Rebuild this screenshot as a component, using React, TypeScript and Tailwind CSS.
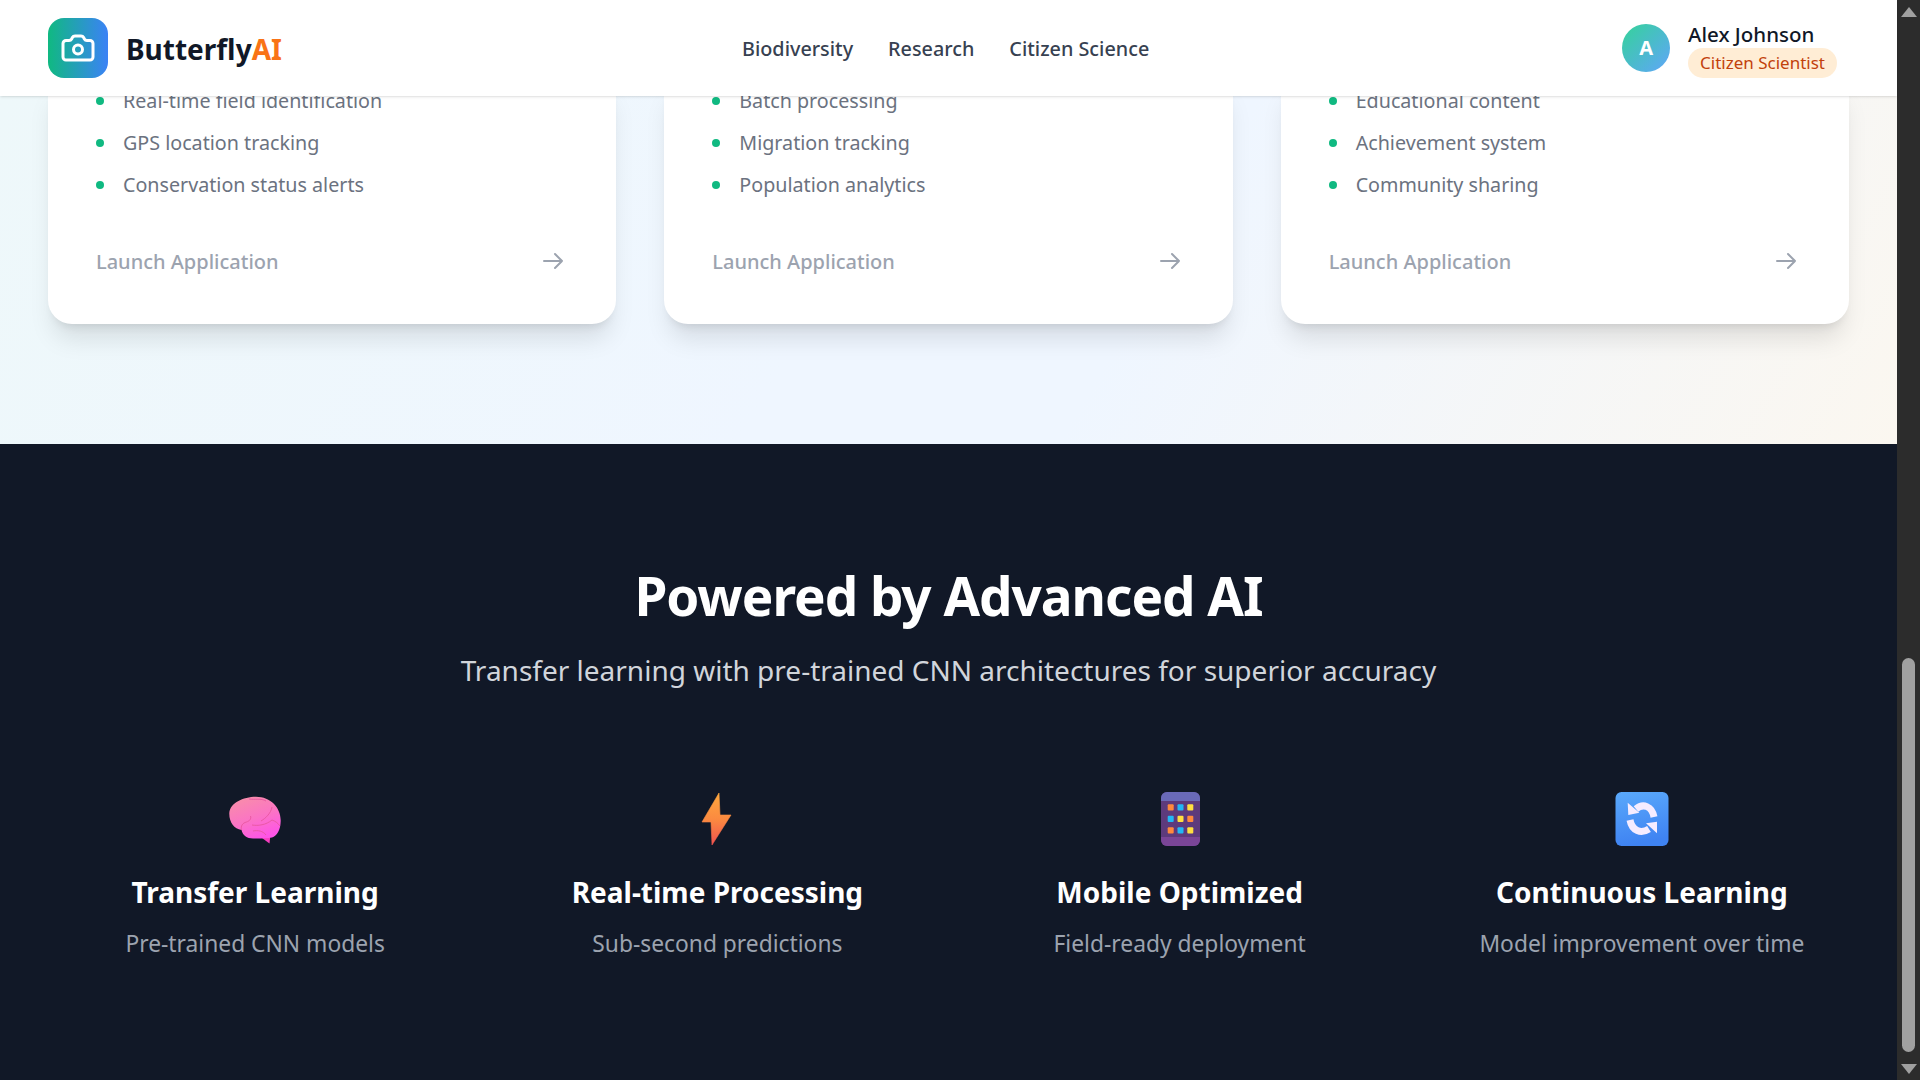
import { Camera } from "lucide-react";

const columns = [
  ["Real-time field identification", "GPS location tracking", "Conservation status alerts"],
  ["Batch processing", "Migration tracking", "Population analytics"],
  ["Educational content", "Achievement system", "Community sharing"],
];

function BrainIcon() {
  return (
    <svg width="60" height="60" viewBox="0 0 60 60">
      <defs>
        <linearGradient id="brainFill" x1="0.15" y1="0" x2="0.6" y2="1">
          <stop offset="0" stopColor="#f88fa8" />
          <stop offset="0.55" stopColor="#fb74c4" />
          <stop offset="1" stopColor="#fe55e6" />
        </linearGradient>
      </defs>
      <path d="M37 49l7.5 5.5.7-6.5z" fill="#f83dc0" />
      <path
        d="M4.3 24C5 14 18 7.7 31 7.7 46 7.7 56 19 55.7 32 55.5 41 52 47 47 48.5 42 49.6 35 49.5 28 49.5 22 49.5 17.5 46 16.5 41 9 40 4 33 4.3 24z"
        fill="url(#brainFill)"
      />
      <g fill="none" stroke="#e8579f" strokeWidth="0.9">
        <path d="M24 10c6 1 12-1 17 2" />
        <path d="M47 18c-1 6-6 11-11 14" />
        <path d="M16.5 41c-1-4 1-7 5-8 3-1 5-3 4-6" />
        <path d="M27 36c6 1 14 0 20-5 3 1 6 3 8 6" />
        <path d="M28 42c5-1 10 0 13 4" />
      </g>
    </svg>
  );
}

function BoltIcon() {
  return (
    <svg width="60" height="60" viewBox="0 0 60 60">
      <defs>
        <linearGradient id="boltFill" x1="0.5" y1="0" x2="0.5" y2="1">
          <stop offset="0" stopColor="#ffa83e" />
          <stop offset="0.5" stopColor="#fb8a40" />
          <stop offset="1" stopColor="#f1524f" />
        </linearGradient>
      </defs>
      <path d="M32 4L15 33h9l1 23 19-30H33z" fill="url(#boltFill)" stroke="url(#boltFill)" strokeWidth="0.6" strokeLinejoin="round" />
    </svg>
  );
}

function PhoneIcon() {
  const cells = ["#ff8a3c", "#22b8f5", "#ffdf3f", "#22b8f5", "#ffdf3f", "#ff8a3c", "#ff8a3c", "#22b8f5", "#ffdf3f"];
  return (
    <svg width="60" height="60" viewBox="0 0 60 60">
      <rect x="11" y="3" width="39" height="54" rx="6" fill="#5d3a7c" />
      <path d="M11 12V9a6 6 0 0 1 6-6h27a6 6 0 0 1 6 6v3z" fill="#6a6ab8" />
      <path d="M11 48v3a6 6 0 0 0 6 6h27a6 6 0 0 0 6-6v-3z" fill="#7a4597" />
      {cells.map((c, i) => (
        <rect key={i} x={17.7 + (i % 3) * 9.8} y={15.3 + Math.floor(i / 3) * 11.5} width="6" height="6.2" rx="1" fill={c} />
      ))}
    </svg>
  );
}

function RefreshIcon() {
  return (
    <svg width="60" height="60" viewBox="0 0 60 60">
      <defs>
        <linearGradient id="refreshFill" x1="0" y1="0" x2="0.2" y2="1">
          <stop offset="0" stopColor="#5aa9fb" />
          <stop offset="1" stopColor="#3f83f2" />
        </linearGradient>
      </defs>
      <rect x="3.5" y="3" width="53" height="54" rx="6" fill="url(#refreshFill)" />
      <g fill="none" stroke="#f6ecff" strokeWidth="7">
        <path d="M24 20C31 14 40 17 42 28" />
        <path d="M18 31C20 42 29 45 37 40" />
      </g>
      <path d="M15.7 13.7L16.3 26l11-2.3zM45 44.3V32.7l-11 1.6z" fill="#f6ecff" />
    </svg>
  );
}

const features = [
  { icon: <BrainIcon />, title: "Transfer Learning", text: "Pre-trained CNN models" },
  { icon: <BoltIcon />, title: "Real-time Processing", text: "Sub-second predictions" },
  { icon: <PhoneIcon />, title: "Mobile Optimized", text: "Field-ready deployment" },
  { icon: <RefreshIcon />, title: "Continuous Learning", text: "Model improvement over time" },
];

export default function App() {
  return (
    <div className="flex h-screen overflow-hidden font-['Noto_Sans',sans-serif]">
      <div className="flex flex-col flex-1 min-w-0">
        {/* Header */}
        <header className="relative z-10 h-[96px] shrink-0 bg-white shadow-sm flex items-center px-12">
          <div className="flex items-center gap-[18px] w-[694px]">
            <div className="w-[60px] h-[60px] rounded-2xl bg-linear-to-r/srgb from-[#10b981] to-[#3b82f6] flex items-center justify-center">
              <Camera size={36} color="white" strokeWidth={2} />
            </div>
            <span className="mt-[2px] text-[28px] font-bold text-[#111827]">
              Butterfly<span className="text-[#f97316]">AI</span>
            </span>
          </div>
          <nav className="mt-[2px] flex gap-[35px] text-[19.8px] font-medium text-[#374151]">
            <span>Biodiversity</span>
            <span>Research</span>
            <span>Citizen Science</span>
          </nav>
          <div className="ml-auto flex items-center gap-[18px] pr-3">
            <div className="w-12 h-12 rounded-full bg-linear-to-br/srgb from-[#34d399] to-[#60a5fa] flex items-center justify-center text-white font-bold text-xl">
              A
            </div>
            <div className="mt-[2px] flex flex-col items-start">
              <span className="text-[20.5px] leading-[28px] font-medium text-[#111827]">Alex Johnson</span>
              <span className="text-[17px] leading-[30px] px-3 rounded-full bg-[#ffedd5] text-[#c2410c]">
                Citizen Scientist
              </span>
            </div>
          </div>
        </header>

        {/* Cards */}
        <section className="h-[348px] shrink-0 overflow-hidden px-12 bg-[linear-gradient(120deg,#eef8fa_0%,#eff6ff_45%,#eff6ff_60%,#fbf7f0_100%)]">
          <div className="grid grid-cols-3 gap-12 -mt-[16px]">
            {columns.map((items, i) => (
              <div key={i} className="bg-white rounded-b-3xl shadow-xl px-12 pb-[47px]">
                <ul className="flex flex-col">
                  {items.map((item) => (
                    <li key={item} className="flex items-center gap-[19px] h-[42px] text-[19.7px] text-[#6b7280]">
                      <span className="w-2 h-2 rounded-full bg-[#10b981]" />
                      {item}
                    </li>
                  ))}
                </ul>
                <div className="flex items-center justify-between mt-[41px] text-[#9ca3af] text-[20px] font-medium">
                  <span>Launch Application</span>
                  <svg className="w-6 h-6 mr-[3px] mb-[2px]" fill="none" viewBox="0 0 24 24" stroke="currentColor" strokeWidth={2}>
                    <path strokeLinecap="round" strokeLinejoin="round" d="M14 5l7 7m0 0l-7 7m7-7H3" />
                  </svg>
                </div>
              </div>
            ))}
          </div>
        </section>

        {/* AI section */}
        <section className="flex-1 bg-[#111827] px-12 pt-[112px] text-center">
          <h2 className="text-[53px] leading-[80px] font-bold tracking-[-1px] text-white">Powered by Advanced AI</h2>
          <p className="mt-[13px] text-[28px] text-[#d1d5db]">Transfer learning with pre-trained CNN architectures for superior accuracy</p>
          <div className="grid grid-cols-4 gap-12 mt-[98px]">
            {features.map((f) => (
              <div key={f.title} className="flex flex-col items-center">
                {f.icon}
                <h3 className="mt-[22px] text-[28px] font-bold text-white">{f.title}</h3>
                <p className="mt-[14px] text-[22.8px] text-[#9ca3af]">{f.text}</p>
              </div>
            ))}
          </div>
        </section>
      </div>

      {/* Scrollbar */}
      <div className="w-[23px] shrink-0 bg-[#2c2c2c] flex flex-col items-center pt-[7px] pb-[6px]">
        <div className="w-0 h-0 border-x-[8px] border-x-transparent border-b-[10px] border-b-[#a0a0a0]" />
        <div className="mt-auto w-[13px] h-[394px] rounded-full bg-[#a0a0a0]" />
        <div className="mt-[12px] w-0 h-0 border-x-[8px] border-x-transparent border-t-[10px] border-t-[#a0a0a0]" />
      </div>
    </div>
  );
}
